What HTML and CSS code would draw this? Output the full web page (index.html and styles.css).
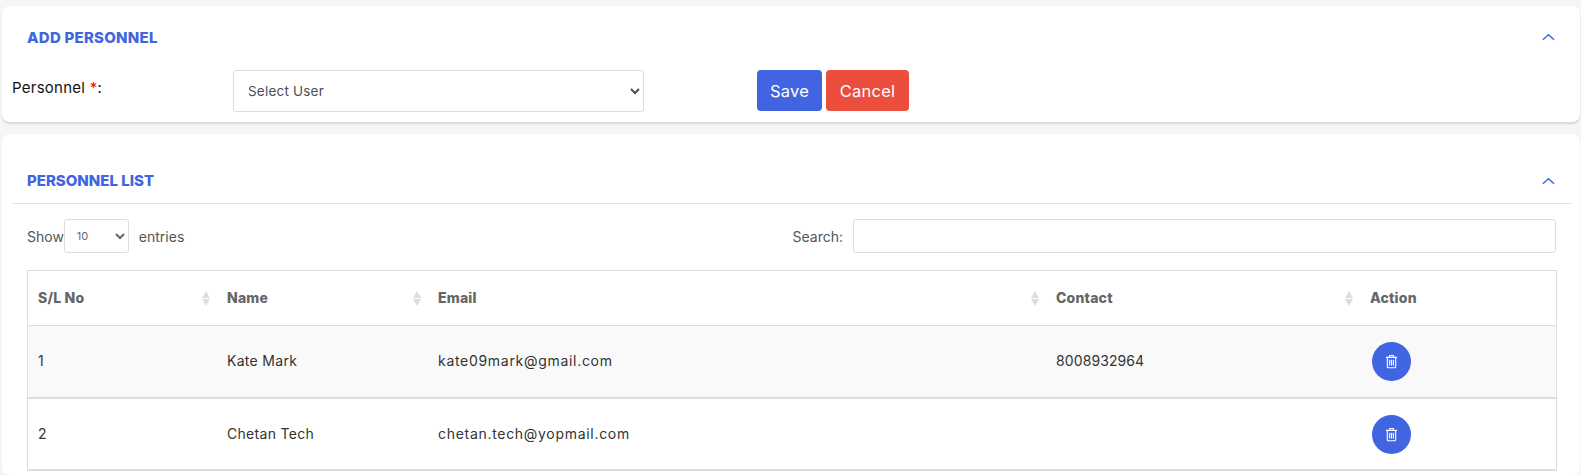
FILE: index.html
```html
<!DOCTYPE html>
<html lang="en">
<head>
    <meta charset="UTF-8">
    <title>Personnel</title>
    <link rel="stylesheet" href="styles.css">
</head>
<body>

    <div class="card card-add">
        <div class="card-head">
            <h4 class="title-add">ADD PERSONNEL</h4>
            <svg class="chevron" width="13" height="8" viewBox="0 0 14 8"><path d="M1 7l6-5.5L13 7" fill="none" stroke="#4164e0" stroke-width="1.6"/></svg>
        </div>
        <div class="form-row">
            <label class="form-label">Personnel <span class="req">*</span>:</label>
            <div class="select-wrap">
                <select class="user-select">
                    <option>Select User</option>
                </select>
            </div>
            <button class="btn btn-save">Save</button>
            <button class="btn btn-cancel">Cancel</button>
        </div>
    </div>

    <div class="card card-list">
        <div class="card-head head-line">
            <h4>PERSONNEL LIST</h4>
            <svg class="chevron" width="13" height="8" viewBox="0 0 14 8"><path d="M1 7l6-5.5L13 7" fill="none" stroke="#4164e0" stroke-width="1.6"/></svg>
        </div>

        <div class="table-tools">
            <div class="length">
                <span>Show</span>
                <select class="length-select"><option>10</option></select>
                <span class="entries">entries</span>
            </div>
            <div class="search">
                <label>Search:</label>
                <input type="text" class="search-input">
            </div>
        </div>

        <table class="data-table">
            <thead>
                <tr>
                    <th class="col-sl">S/L No<span class="sort"></span></th>
                    <th class="col-name">Name<span class="sort"></span></th>
                    <th class="col-email">Email<span class="sort"></span></th>
                    <th class="col-contact">Contact<span class="sort"></span></th>
                    <th>Action</th>
                </tr>
            </thead>
            <tbody>
                <tr class="odd">
                    <td>1</td>
                    <td class="cell-name">Kate Mark</td>
                    <td class="cell-email">kate09mark@gmail.com</td>
                    <td>8008932964</td>
                    <td>
                        <button class="btn-delete">
                            <svg width="13" height="15" viewBox="0 0 14 16"><path d="M1 3.5h12M5 3.5V1.6h4v1.9M2.5 3.5v10.2c0 .7.4 1.1 1 1.1h7c.6 0 1-.4 1-1.1V3.5M5 6.2v6M7 6.2v6M9 6.2v6" fill="none" stroke="#fff" stroke-width="1.2"/></svg>
                        </button>
                    </td>
                </tr>
                <tr>
                    <td>2</td>
                    <td class="cell-name">Chetan Tech</td>
                    <td class="cell-email">chetan.tech@yopmail.com</td>
                    <td></td>
                    <td>
                        <button class="btn-delete">
                            <svg width="13" height="15" viewBox="0 0 14 16"><path d="M1 3.5h12M5 3.5V1.6h4v1.9M2.5 3.5v10.2c0 .7.4 1.1 1 1.1h7c.6 0 1-.4 1-1.1V3.5M5 6.2v6M7 6.2v6M9 6.2v6" fill="none" stroke="#fff" stroke-width="1.2"/></svg>
                        </button>
                    </td>
                </tr>
            </tbody>
        </table>
    </div>

</body>
</html>
```

FILE: styles.css
```css
html, body {
    height: 475px;
    overflow: hidden;
}

body {
    font-family: Inter, "Noto Sans", sans-serif;
    font-size: 14px;
    color: #212529;
    background-color: #f5f5f5;
    margin: 0;
    padding: 6px 1px 0 2px;
    box-sizing: border-box;
}

.card {
    background-color: #fff;
    border-radius: 8px;
    box-sizing: border-box;
}

.card-add {
    height: 116px;
    box-shadow: 0 2px 2px rgba(0, 0, 0, 0.12);
    margin-bottom: 12px;
}

.card-list {
    height: 341px;
    padding-top: 28px;
}

.card-head {
    display: flex;
    justify-content: space-between;
    align-items: center;
    height: 34px;
    padding: 14px 25px 0 25px;
}

.card-head h4 {
    margin: 0;
    font-size: 15px;
    font-weight: 800;
    color: #4164e0;
}

.card-head .title-add {
    letter-spacing: 0.25px;
}

.chevron {
    display: block;
}

.head-line {
    height: 37px;
    padding: 0 16px 4px 15px;
    margin: 0 9px 0 10px;
    border-bottom: 1px solid #dee2e6;
}

.form-row {
    display: flex;
    align-items: flex-start;
    margin-top: 16px;
    height: 42px;
}

.form-label {
    width: 231px;
    padding: 8px 0 0 10px;
    box-sizing: border-box;
    font-size: 15px;
    letter-spacing: 0.25px;
    color: #111;
}

.req {
    color: #f00;
}

.select-wrap {
    width: 524px;
}

.user-select {
    width: 411px;
    height: 42px;
    padding: 0 10px;
    font-family: inherit;
    font-size: 13.5px;
    letter-spacing: 0.2px;
    color: #495057;
    background-color: #fff;
    border: 1px solid #ddd;
    border-radius: 3px;
}

.btn {
    height: 41px;
    margin-right: 4px;
    border: none;
    border-radius: 4px;
    color: #fff;
    font-family: inherit;
    font-size: 16.5px;
    letter-spacing: 0.2px;
    cursor: pointer;
}

.btn-save {
    width: 65px;
    background-color: #4164e0;
}

.btn-cancel {
    width: 83px;
    background-color: #ec4e3e;
}

.table-tools {
    display: flex;
    justify-content: space-between;
    align-items: center;
    height: 34px;
    margin: 15px 24px 17px 25px;
    color: #555;
}

.length {
    display: flex;
    align-items: center;
}

.length-select {
    width: 65px;
    height: 34px;
    padding: 0 8px;
    font-family: inherit;
    font-size: 11px;
    color: #666;
    background-color: #fff;
    border: 1px solid #ddd;
    border-radius: 3px;
}

.entries {
    margin-left: 10px;
}

.search {
    display: flex;
    align-items: center;
}

.search-input {
    width: 703px;
    height: 34px;
    margin-left: 10px;
    box-sizing: border-box;
    border: 1px solid #ddd;
    border-radius: 3px;
}

.data-table {
    width: 1530px;
    margin-left: 25px;
    table-layout: fixed;
    border-collapse: collapse;
    border: 1px solid #ddd;
}

.data-table th {
    position: relative;
    height: 52px;
    padding: 0 10px 2px;
    text-align: left;
    font-size: 14px;
    font-weight: 800;
    letter-spacing: 0.2px;
    color: #666;
    border-bottom: 1px solid #ddd;
}

.data-table td {
    height: 69px;
    padding: 0 10px 2px;
    color: #333;
    border-bottom: 2px solid #ddd;
    letter-spacing: 0.1px;
}

.data-table tbody tr:last-child td {
    height: 68px;
}

.data-table .cell-name {
    letter-spacing: 0.3px;
}

.data-table .cell-email {
    letter-spacing: 0.7px;
}

.odd td {
    background-color: #f9f9f9;
}

.col-sl { width: 169px; }
.col-name { width: 191px; }
.col-email { width: 598px; }
.col-contact { width: 294px; }

/* sort arrows sit over the header cell */
.sort {
    position: absolute;
    top: 20px;
    right: 7px;
    width: 0;
    height: 0;
    border-left: 4px solid transparent;
    border-right: 4px solid transparent;
    border-bottom: 7px solid #ddd;
}

.sort::after {
    content: "";
    position: absolute;
    top: 8px;
    left: -4px;
    border-left: 4px solid transparent;
    border-right: 4px solid transparent;
    border-top: 7px solid #ddd;
}

.btn-delete {
    display: flex;
    align-items: center;
    justify-content: center;
    width: 39px;
    height: 39px;
    margin: 1px 0 -1px 2px;
    padding: 0;
    border: none;
    border-radius: 50%;
    background-color: #4164e0;
    cursor: pointer;
}
```
